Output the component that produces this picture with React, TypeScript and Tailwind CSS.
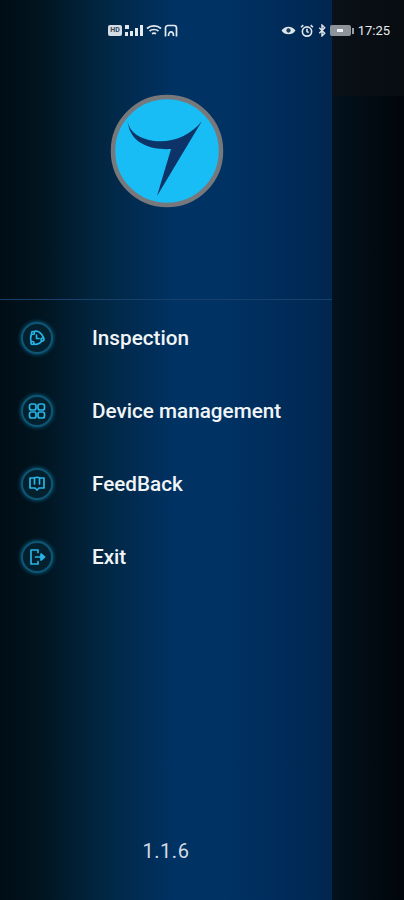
const font = { fontFamily: '"Roboto", "Liberation Sans", sans-serif' };

function IconRing({ children }: { children: React.ReactNode }) {
  return (
    <div className="flex h-[32px] w-[32px] items-center justify-center rounded-full border-2 border-[#0e5674] bg-[#03202f] shadow-[0_0_4px_#0d6f95]">
      <svg width="18" height="18" viewBox="0 0 18 18" fill="none" stroke="#27b4e6" strokeWidth="1.7" strokeLinecap="round" strokeLinejoin="round">
        {children}
      </svg>
    </div>
  );
}

const items = [
  {
    label: "Inspection",
    icon: (
      <>
        <path d="M6 2.500C9.500 1.500 13 3.500 15.500 8.500C16 10 15 11.500 13.500 12.500C11 15.500 7 16 4.500 14.500C2 12 1.500 6 6 2.500Z" />
        <circle cx="5" cy="4" r="1.500" fill="#03202f" />
        <circle cx="4.500" cy="14" r="1.500" fill="#03202f" />
        <circle cx="14.500" cy="10.500" r="1.500" fill="#03202f" />
        <path d="M8.500 6v3.500h2.500" />
      </>
    ),
  },
  {
    label: "Device management",
    icon: (
      <>
        <rect x="1.500" y="2" width="6.500" height="6" rx="2" />
        <rect x="10" y="2" width="6.500" height="6" rx="2" />
        <rect x="1.500" y="10" width="6.500" height="6" rx="2" />
        <rect x="10" y="10" width="6.500" height="6" rx="2" />
      </>
    ),
  },
  {
    label: "FeedBack",
    icon: (
      <>
        <path d="M6 3H2v10h5l2 2 2-2h5V3h-4" />
        <path d="M6.500 3v6M11.500 3v6" />
        <path d="M6.500 3c1-1 4-1 5 0" />
      </>
    ),
  },
  {
    label: "Exit",
    icon: (
      <>
        <path d="M10 4.500V2H3v14h7v-2.500" />
        <path d="M7.500 9H13" />
        <path d="M13 6l3.500 3-3.500 3Z" fill="#27b4e6" />
      </>
    ),
  },
];

function LeftStatusIcons() {
  return (
    <div className="flex items-center gap-[2px]">
      <div className="flex h-[11px] w-[14px] items-center justify-center rounded-[2px] bg-[#d5dde4] text-[7px] font-bold leading-none text-[#33445a]">HD</div>
      <svg width="20" height="12" viewBox="0 0 20 12">
        <rect x="1" y="0" width="4" height="4" fill="#e5eaef" />
        <path d="M1 11h3V7H1ZM6 11h3V6H6ZM11 11h3V3h-3ZM16 11h3V0h-3Z" fill="#e5eaef" />
      </svg>
      <svg width="16" height="13" viewBox="0 0 16 13" fill="none" stroke="#e5eaef" strokeWidth="1.700">
        <path d="M1 4.500c3.800-3.400 10-3.400 14 0M3.500 7c2.400-2 6.600-2 9 0M6 9.800c1.200-.8 2.800-.8 4 0" />
      </svg>
      <svg width="14" height="14" viewBox="0 0 14 14" fill="none" stroke="#e5eaef" strokeWidth="1.700">
        <path d="M1.500 12.500V4a2.500 2.500 0 0 1 2.500-2.500h6A2.500 2.500 0 0 1 12.500 4v8.500" />
        <path d="M4.500 12c0-5.500 5-5.500 5 0" />
      </svg>
    </div>
  );
}

function RightStatusIcons() {
  return (
    <div className="flex items-center gap-[4px]">
      <svg width="15" height="11" viewBox="0 0 14 10">
        <path d="M.5 5C3.500.2 10.500.2 13.500 5 10.500 9.800 3.500 9.800.5 5Z" fill="#dfe5ea" />
        <circle cx="7" cy="5" r="2" fill="#1d4060" />
      </svg>
      <svg width="14" height="14" viewBox="0 0 13 13" fill="none" stroke="#dfe5ea" strokeWidth="1.500">
        <circle cx="6.500" cy="7" r="4.300" />
        <path d="M1 3l2-2M12 3l-2-2M6.500 4.500V7l1.500 1" />
      </svg>
      <svg width="8" height="13" viewBox="0 0 7 12" fill="none" stroke="#dfe5ea" strokeWidth="1.300">
        <path d="M1 3.500l5 5L3.500 11V1L6 3.500l-5 5" />
      </svg>
      <div className="flex items-center">
        <div className="flex h-[11px] w-[21px] items-center justify-center rounded-[2px] bg-[#8d959b]">
          <div className="h-[3px] w-[6px] bg-[#eef1f3]" />
        </div>
        <div className="ml-[1px] h-[6px] w-[2px] bg-[#9aa1a6]" />
      </div>
      <span className="text-[13px] leading-none text-[#e6eaee]">17:25</span>
    </div>
  );
}

export default function App() {
  return (
    <div className="relative flex h-[900px] w-[404px] overflow-hidden bg-black text-white" style={font}>
      {/* Status bar sits over drawer and dimmed area */}
      <div className="absolute left-[108px] right-[14px] top-[23px] flex h-[15px] items-center justify-between">
        <LeftStatusIcons />
        <RightStatusIcons />
      </div>
      {/* Drawer */}
      <div className="flex w-[332px] flex-col bg-[linear-gradient(90deg,#010d16_0%,#01141f_12%,#022641_30%,#003264_53%,#003264_68%,#002a56_90%,#01264f_100%)]">
        <div className="flex h-[300px] flex-col border-b border-[#17406a] pt-[94px]">
          {/* Logo */}
          <div className="flex justify-center pl-[1px]">
            <svg width="114" height="114" viewBox="0 0 114 114">
              <circle cx="57" cy="57" r="54" fill="#19bdf6" stroke="#77787c" strokeWidth="4.500" />
              <path d="M17.600 27C19 38 30 45 44 47C62 49 80 42 92 27L47 102L61 55C45 56 20 52 17.600 27Z" fill="#0c3468" />
            </svg>
          </div>
        </div>
        {/* Menu */}
        <div className="flex flex-col pl-[21px] pt-[1px]">
          {items.map((item) => (
            <div key={item.label} className="flex h-[73px] items-center">
              <IconRing>{item.icon}</IconRing>
              <span className="ml-[39px] pt-[1px] text-[20.700px] font-medium leading-none text-[#f2f5f8]">{item.label}</span>
            </div>
          ))}
        </div>
        <div className="mt-[248px] text-center text-[20px] leading-none tracking-[0.500px] text-[#d3dce4]">1.1.6</div>
      </div>
      {/* Dimmed area */}
      <div className="flex flex-1 flex-col bg-[linear-gradient(90deg,#02121e_0%,#020c14_45%,#01060c_100%)]">
        <div className="h-[96px] bg-[linear-gradient(90deg,#0a1118,#070c10)]" />
      </div>
    </div>
  );
}
